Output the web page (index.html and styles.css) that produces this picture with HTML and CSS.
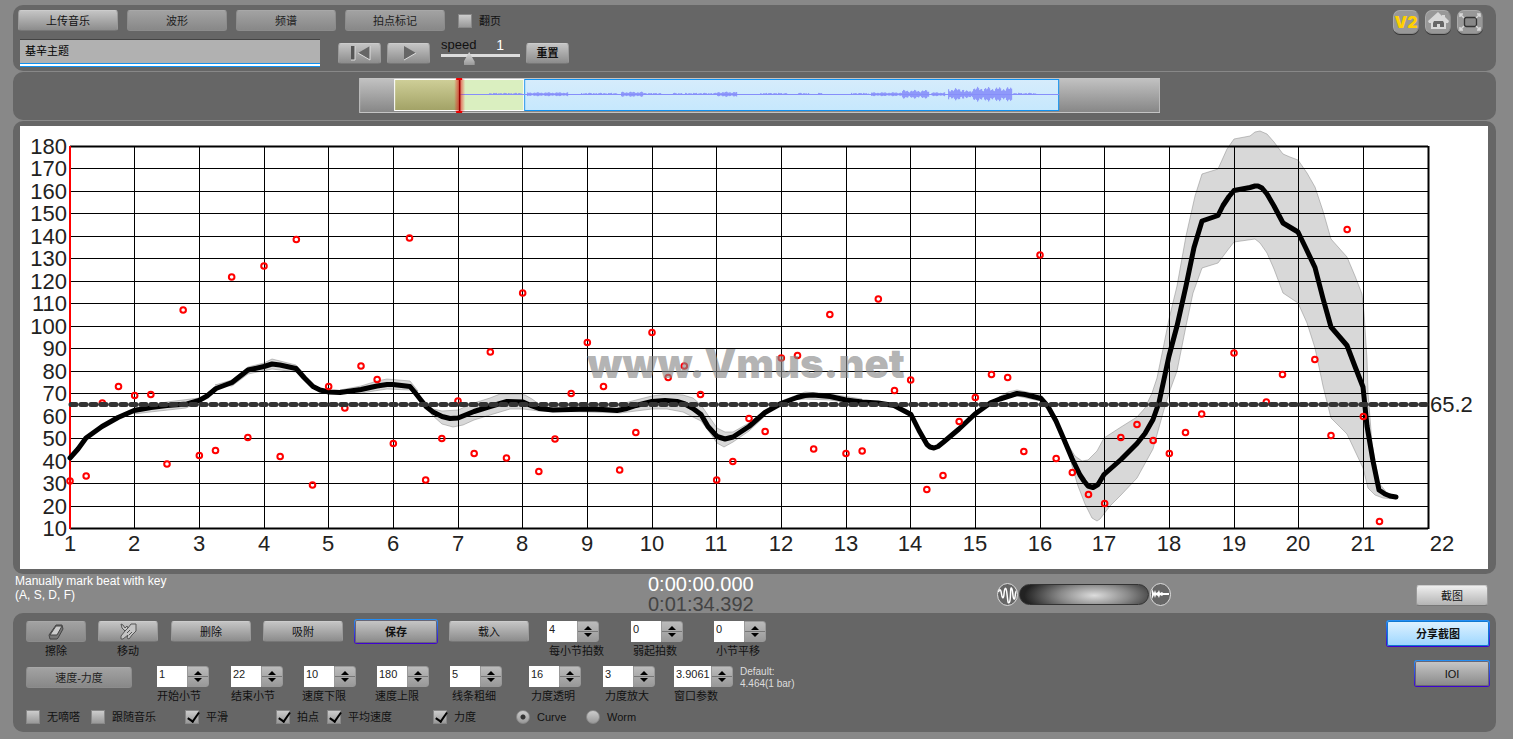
FILE: index.html
```
<!DOCTYPE html>
<html lang="zh-CN">
<head>
  <meta charset="UTF-8">
  <title>Vmus.net</title>
  <link rel="stylesheet" href="styles.css">
</head>
<body>
  <header class="panel top-panel">
    <div class="top-main">
      <div class="tab-row">
        <button class="btn tab">上传音乐</button>
        <button class="btn tab dim">波形</button>
        <button class="btn tab dim">频谱</button>
        <button class="btn tab dim">拍点标记</button>
        <label class="check"><input type="checkbox"><span>翻页</span></label>
      </div>
      <div class="play-row">
        <input class="title-input" type="text" value="基辛主题" aria-label="标题">
        <div class="play-buttons">
          <button class="btn play" aria-label="回到开头">
            <svg width="22" height="16" viewBox="0 0 22 16"><path d="M2 1v14h4V1z" fill="#555"/><path d="M21 1v14L9 8z" fill="#666"/><path d="M9 8l12 7V1M6 1v14H2" fill="none" stroke="#ddd"/></svg>
          </button>
          <button class="btn play" aria-label="播放">
            <svg width="16" height="16" viewBox="0 0 16 16"><path d="M3 1v14l12-7z" fill="#666"/><path d="M3 15l12-7" stroke="#ddd"/></svg>
          </button>
        </div>
        <div class="speed">
          <label for="speed">speed</label>
          <output for="speed">1</output>
          <input id="speed" type="range" min="0" max="3" step="0.1" value="1">
        </div>
        <button class="btn reset">重置</button>
      </div>
    </div>
    <nav class="corner">
      <button class="corner-btn v2">V2</button>
      <button class="corner-btn" aria-label="主页">
        <svg width="24" height="22" viewBox="0 0 24 22"><path d="M12 1L2 10l1 2h2v6h15v-6h2l1-2-4-4V4h-3v1z" fill="#d8d8d8"/><path d="M7 16v-4l1-2h9l1 2v4h-4v-3h-3v3z" fill="#666"/></svg>
      </button>
      <button class="corner-btn" aria-label="全屏">
        <svg width="24" height="22" viewBox="0 0 24 22"><rect x="6.500" y="6.500" width="12" height="9" rx="2" fill="#888" stroke="#333" stroke-width="1.300"/><path d="M2 6V3h3M2 3l4 4M22 6V3h-3M22 3l-4 4M2 16v3h3M2 19l4-4M22 16v3h-3M22 19l-4-4" fill="none" stroke="#d8d8d8" stroke-width="1.500"/></svg>
      </button>
    </nav>
  </header>

  <section class="panel overview-panel">
    <svg class="overview" viewBox="0 0 801 35">
      <defs>
        <linearGradient id="gBox" x2="0" y2="1"><stop offset="0" stop-color="#c2c2c2"/><stop offset="1" stop-color="#868686"/></linearGradient>
        <linearGradient id="gBlue" x2="0" y2="1"><stop offset="0" stop-color="#d6ecfc"/><stop offset="1" stop-color="#c6e8fd"/></linearGradient>
        <linearGradient id="gOlive" x2="0" y2="1"><stop offset="0" stop-color="#cfcf98"/><stop offset="1" stop-color="#a2a266"/></linearGradient>
        <linearGradient id="gGlow"><stop offset="0" stop-color="#f00" stop-opacity="0"/><stop offset=".5" stop-color="#d22" stop-opacity=".7"/><stop offset="1" stop-color="#f00" stop-opacity="0"/></linearGradient>
      </defs>
      <rect x=".5" y=".5" width="800" height="34" fill="url(#gBox)" stroke="#c4c4c4"/>
      <rect x="165.500" y="1.500" width="534" height="31" fill="url(#gBlue)" stroke="#1191f0"/>
      <rect x="35.500" y="1.500" width="129" height="31" fill="#daefc0"/>
      <rect x="35.500" y="1.500" width="65" height="31" fill="url(#gOlive)"/>
      <rect x="35.500" y="1.500" width="129" height="31" fill="none" stroke="#fff"/>
      <path id="wave" stroke="#868efa" fill="none"/>
      <rect x="95" y="1" width="11" height="33" fill="url(#gGlow)"/>
      <path d="M100.500 1v33" stroke="#900" stroke-width="1.500"/>
      <path d="M97 0h6v2h-6zM97 33h6v2h-6z" fill="#e00"/>
    </svg>
  </section>

  <main class="panel chart-panel">
    <svg class="chart" viewBox="0 0 1468 443">
      <g fill="#888" fill-opacity=".33" stroke="#888" stroke-opacity=".5">
        <polygon points="1047,317 1055,330 1062,335 1068,334 1077,325 1084,312 1101,301 1117,291 1125,282 1132,267 1137,252 1143,223 1149,193 1157,160 1166,110 1175,70 1182,48 1198,43 1207,23 1214,13 1230,10 1235,6 1240,5 1247,8 1254,16 1263,28 1270,31 1278,34 1287,47 1295,61 1303,85 1311,113 1327,131 1335,150 1342,168 1344,187 1347,233 1348,267 1352,317 1359,357 1367,367 1376,370 1376,373 1363,372 1355,369 1348,362 1343,342 1327,308 1311,292 1303,260 1295,222 1287,197 1278,177 1263,167 1254,143 1247,127 1240,117 1235,113 1214,116 1207,125 1198,137 1182,142 1173,167 1166,200 1157,245 1149,267 1143,287 1133,323 1117,352 1101,369 1090,380 1080,393 1077,395 1072,392 1065,378 1058,360 1052,340"/>
        <polygon points="402,273 413,283 422,285 438,284 454,277 470,272 480,268 500,268 505,269 512,273 519,278 567,280 590,281 616,274 632,270 647,268 663,269 673,272 681,279 697,302 705,306 713,306 729,297 745,284 745,290 729,305 713,316 704,321 697,317 690,307 681,295 663,286 647,283 632,283 600,287 567,286 519,285 503,283 490,283 470,289 454,294 443,299 433,301 422,298 412,289"/>
        <polygon points="195,259 212,254 228,241 244,237 252,233 260,235 276,239 286,250 276,246 252,243 228,248 212,260"/>
        <polygon points="320,264 341,260 357,255 367,253 390,255 398,265 390,264 367,263 341,267"/>
        <polygon points="114,282 147,276 179,272 186,272 166,282 130,286 114,288"/>
        <polygon points="761,275 785,266 810,268 842,273 842,279 810,274 785,273"/>
        <polygon points="975,273 988,266 997,264 1021,269 1025,276 997,270"/>
      </g>
      <g id="grid"></g>
      <polyline class="curve" points="50,332 58,323 66,312 82,300.500 98,291.500 114,284.500 131,281.500 147,279.500 167,278 179,274.500 187,270 196,262.500 212,256.500 228,244 244,240.500 252,238 260,239 276,242.500 284,251.500 293,260.500 300,264 309,266 320,266.500 341,263.500 357,260 367,258.500 373,258.500 390,260.500 395,266.500 406,280.500 413,286 422,290.500 430,292.500 438,292 454,285.500 470,280.500 487,275.500 503,276 512,280 519,282.500 533,284 551,283.500 567,283 583,283.500 597,284.500 607,282.500 616,279.500 632,275.500 645,274.500 657,275.500 665,278 673,282.500 681,288.500 688,300.500 697,310.500 705,313 713,311 729,300.500 745,286.500 761,277.500 777,271.500 785,269.500 793,269 810,270.500 826,274 842,276 858,277 874,279.500 891,288.500 899,304.500 907,318.500 910,321 914,322 918,320.500 923,316.500 939,303 955,288 971,276.500 980,273 997,267.500 1005,268.500 1021,272.500 1028,280.500 1036,295 1044,313.500 1052,332.500 1060,349 1064,355 1068,360 1073,361.500 1078,358.500 1084,348.500 1101,333.500 1117,317.500 1125,307.500 1133,293.500 1139,276.500 1149,230 1157,200 1166,160 1174,121.500 1182,95 1198,89.500 1203,79.500 1209,70.500 1214,64.500 1230,61.500 1235,60 1238,60 1242,62 1247,68 1254,80 1263,97 1278,106 1286,122.500 1295,141.500 1303,172.500 1311,201 1327,219.500 1335,240.500 1343,261 1347,300 1353,335 1359,364 1365,368 1370,370 1376,371"/>
      <g id="dots"></g>
      <path class="average" d="M51 278.500H1407"/>
      <text class="axis" x="1410" y="286">65.2</text>
      <text class="watermark" x="726" y="252">www.Vmus.net</text>
    </svg>
  </main>

  <section class="status">
    <p class="hint">Manually mark beat with key<br>(A, S, D, F)</p>
    <div class="time"><div>0:00:00.000</div><div class="total">0:01:34.392</div></div>
    <div class="volume">
      <svg width="21" height="23" viewBox="0 0 21 23"><ellipse cx="10.500" cy="11.500" rx="10" ry="11" fill="#666" stroke="#ddd"/><path d="M1.500 9C3 5 4 7 4.500 11s2 6 2.500 0 2-9 3 0 1 10 2.500 8S13 4 14.500 5s1 10 2.500 11 1-8 2.500-8" fill="none" stroke="#fff" stroke-width="1.500"/></svg>
      <input type="range" value="60" aria-label="音量">
      <svg width="21" height="23" viewBox="0 0 21 23"><ellipse cx="10.500" cy="11.500" rx="10" ry="11" fill="#666" stroke="#ddd"/><path d="M2 6l2 4 1-3 1 3 2-1 1-2 1 3 2-1 1 1h6v2h-6l-1 1-2-1-1 3-1-2-2-1-1 3-1-3-2 4z" fill="#fff"/></svg>
    </div>
    <button class="btn shot">截图</button>
  </section>

  <section class="panel control-panel">
    <div class="controls">
      <div class="row row-edit">
        <div class="tool">
          <button class="btn dim" id="erase"><svg width="18" height="16" viewBox="0 0 18 16"><path d="M9 1h6l1 4-5 9-1 1H3l-1-4z" fill="#777" stroke="#444"/><path d="M9 2h6l-5 9H3z" fill="#ccc" stroke="#444"/></svg></button>
          <label for="erase">擦除</label>
        </div>
        <div class="tool">
          <button class="btn" id="move"><svg width="18" height="17" viewBox="0 0 18 17"><path d="M2 1l1 4 3 3-4 5v3h2l5-4-1 3 2 1 3-4 4-4V1h-5L9 5 8 3 6 5 4 2z" fill="#c4c4c4" stroke="#555"/><path d="M6 8l3-3M8 10l3-3M10 12l3-3" stroke="#555"/></svg></button>
          <label for="move">移动</label>
        </div>
        <button class="btn wide">删除</button>
        <button class="btn wide">吸附</button>
        <button class="btn wide outlined save">保存</button>
        <button class="btn wide">载入</button>
        <div class="field indent"><div class="spinner"><input id="f1" type="number" value="4"><button aria-label="调整"></button></div><label for="f1">每小节拍数</label></div>
        <div class="field indent"><div class="spinner"><input id="f2" type="number" value="0"><button aria-label="调整"></button></div><label for="f2">弱起拍数</label></div>
        <div class="field indent"><div class="spinner"><input id="f3" type="number" value="0"><button aria-label="调整"></button></div><label for="f3">小节平移</label></div>
      </div>
      <div class="row row-range">
        <button class="btn dim mode">速度-力度</button>
        <div class="field"><div class="spinner"><input id="f4" type="number" value="1"><button aria-label="调整"></button></div><label for="f4">开始小节</label></div>
        <div class="field"><div class="spinner"><input id="f5" type="number" value="22"><button aria-label="调整"></button></div><label for="f5">结束小节</label></div>
        <div class="field outdent"><div class="spinner"><input id="f6" type="number" value="10"><button aria-label="调整"></button></div><label for="f6">速度下限</label></div>
        <div class="field outdent"><div class="spinner"><input id="f7" type="number" value="180"><button aria-label="调整"></button></div><label for="f7">速度上限</label></div>
        <div class="field indent"><div class="spinner"><input id="f8" type="number" value="5"><button aria-label="调整"></button></div><label for="f8">线条粗细</label></div>
        <div class="field indent"><div class="spinner"><input id="f9" type="number" value="16"><button aria-label="调整"></button></div><label for="f9">力度透明</label></div>
        <div class="field indent"><div class="spinner"><input id="f10" type="number" value="3"><button aria-label="调整"></button></div><label for="f10">力度放大</label></div>
        <div class="field"><div class="spinner long"><input id="f11" type="number" step="any" value="3.9061"><button aria-label="调整"></button></div><label for="f11">窗口参数</label></div>
        <p class="default">Default:<br>4.464(1 bar)</p>
      </div>
      <div class="row row-options">
        <label class="check"><input type="checkbox"><span>无嘀嗒</span></label>
        <label class="check"><input type="checkbox"><span>跟随音乐</span></label>
        <label class="check"><input type="checkbox" checked><span>平滑</span></label>
        <label class="check"><input type="checkbox" checked><span>拍点</span></label>
        <label class="check"><input type="checkbox" checked><span>平均速度</span></label>
        <label class="check"><input type="checkbox" checked><span>力度</span></label>
        <label class="check"><input type="radio" name="style" checked><span>Curve</span></label>
        <label class="check"><input type="radio" name="style"><span>Worm</span></label>
      </div>
    </div>
    <div class="side">
      <button class="btn outlined share">分享截图</button>
      <button class="btn outlined ioi">IOI</button>
    </div>
  </section>

  <script>
    const left = 50, right = 1408, top_ = 20, bottom = 402.5;
    const barX = bar => left + (bar - 1) * (right - left) / 21;
    const tempoY = t => bottom - (t - 10) * (bottom - top_) / 170;

    // grid and axis numbers
    let grid = '';
    for (let t = 10; t <= 180; t += 10) {
      const y = Math.floor(tempoY(t)) + 0.5;
      grid += `<path d="M${left} ${y}H${right}" stroke="#000" stroke-width="${t == 10 || t == 180 ? 2 : 1}"/>`;
      grid += `<text class="axis" x="47" y="${Math.round(y + 7)}" text-anchor="end">${t}</text>`;
    }
    for (let bar = 1; bar <= 22; bar++) {
      const x = Math.floor(barX(bar));
      const color = bar == 1 ? '#f00' : '#000';
      grid += `<path d="M${bar == 1 ? x : x + 0.5} ${top_}V403" stroke="${color}" stroke-width="${bar == 1 || bar == 22 ? 2 : 1}"/>`;
      grid += `<text class="axis" x="${bar == 22 ? x + 14 : x}" y="425" text-anchor="middle">${bar}</text>`;
    }
    document.getElementById('grid').innerHTML = grid;

    // one entry per beat, four beats in a bar, 0 = outside the chart
    const beats = [
      355, 350, 277, 260.5, 269.5, 268.5, 338, 184, 329.5, 324.5, 151, 311.5, 140, 330.5, 113.5, 359,
      260.5, 282, 240, 253.5, 317.5, 112, 354, 312.5, 275, 327.5, 226, 332, 167, 345.5, 313, 267.5,
      216.5, 260.5, 344, 306.5, 206.5, 251.5, 240, 268.5, 354, 335.5, 292.5, 305.5, 232, 229.5, 323, 188.5,
      327.5, 325, 173, 264.5, 254, 363.5, 349.5, 295.5, 271.5, 248.5, 251.5, 325.5, 129, 332.5, 346.5, 368.5,
      377.5, 311.5, 298.5, 314.5, 327.5, 306.5, 288, 0, 227, 0, 276, 248.5, 0, 233.5, 309.5, 103.5, 290.5, 395.5
    ];
    document.getElementById('dots').innerHTML = beats.map((y, i) =>
      y ? `<circle cx="${barX(1 + i / 4)}" cy="${y}" r="2.8"/>` : '').join('');

    // [from, to, loudness] parts of the recording
    const parts = [[130, 164, 1], [168, 209, 1.5], [222, 259, 1], [262, 284, 2], [284, 302, 1],
      [313, 324, 1], [326, 358, 1], [358, 378, 2], [401, 428, 1], [438, 450, 1], [458, 464, 1],
      [492, 510, 1], [512, 543, 1.5], [543, 570, 3.5], [572, 586, 1.5], [589, 605, 5],
      [605, 613, 3], [613, 653, 6], [653, 677, 1]];
    let wave = 'M101 16.500H700';
    parts.forEach(([from, to, loud]) => {
      for (let x = from; x < to; x++) {
        const h = loud * (0.8 + 0.2 * Math.sin(x * 1.7) + 0.2 * Math.cos(x * 0.6)) - 0.5;
        if (loud == 1 && x % 5 == 3) continue;
        wave += `M${x + 0.5} ${15.5 - h}V${17 + (loud > 1 ? h : 0)}`;
      }
    });
    document.getElementById('wave').setAttribute('d', wave);
  </script>
</body>
</html>
```
FILE: styles.css
```
* {
  box-sizing: border-box;
}

body {
  margin: 0;
  padding: 5px 17px 7px 13px;
  background: #888;
  font-family: "Liberation Sans", "Noto Sans CJK SC", sans-serif;
  font-size: 11px;
  line-height: 14px;
  color: #111;
}

p {
  margin: 0;
}

svg {
  display: block;
}

.panel {
  background: #666;
  border-radius: 10px;
}

/* buttons */
.btn {
  display: inline-flex;
  align-items: center;
  justify-content: center;
  height: 21px;
  padding: 0;
  border: 1px solid #999;
  border-top-color: #ccc;
  border-bottom-color: #777;
  border-radius: 3px;
  background: linear-gradient(#c4c4c4, #8c8c8c);
  color: #111;
  font-family: inherit;
  font-size: 11px;
  line-height: 14px;
  cursor: pointer;
}

.btn.dim {
  background: linear-gradient(#a2a2a2, #888);
  border-color: #8c8c8c;
  border-top-color: #a8a8a8;
  color: #222;
}

.btn.outlined {
  height: 27px;
  border: 1px solid transparent;
  background: linear-gradient(#c8c8c8, #888) padding-box, linear-gradient(#2490f4, #4000d0) border-box;
  box-shadow: inset 0 0 0 1px #667;
}

/* checkboxes and radios */
.check {
  display: flex;
  align-items: center;
  gap: 7px;
  height: 14px;
  white-space: nowrap;
}

.check input {
  appearance: none;
  flex: none;
  width: 14px;
  height: 14px;
  margin: 0;
  border: 1px solid #888;
  background: linear-gradient(#ccc, #999);
}

.check input[type=checkbox]:checked::after {
  content: "";
  display: block;
  width: 5px;
  height: 10px;
  margin: -1px 0 0 4px;
  border: solid #000;
  border-width: 0 2px 2px 0;
  transform: rotate(35deg);
}

.check input[type=radio] {
  border-radius: 50%;
}

.check input[type=radio]:checked {
  background: radial-gradient(circle, #333 2px, transparent 3px), linear-gradient(#ccc, #999);
}

/* top bar */
.top-panel {
  display: flex;
  justify-content: space-between;
  padding: 5px 13px 4px 5px;
  margin-bottom: 1px;
}

.tab-row {
  display: flex;
  align-items: center;
  gap: 9px;
  margin-bottom: 8px;
}

.tab {
  width: 100px;
}

.tab-row .check {
  margin-left: 4px;
}

.play-row {
  display: flex;
  align-items: center;
  padding-left: 2px;
}

.title-input {
  width: 300px;
  height: 28px;
  margin-right: 18px;
  padding: 0 5px 6px;
  border: 0;
  border-top: 1px solid #444;
  border-bottom: 1px solid #1191f0;
  background: #b1b1b1;
  box-shadow: inset 0 -2px #fff, inset 0 -3px #1191f0;
  font: inherit;
  color: #000;
}

.play-buttons {
  display: flex;
  gap: 6px;
}

.play,
.reset {
  width: 43px;
}

.reset {
  font-weight: bold;
}

.speed {
  display: grid;
  grid-template-columns: 1fr auto;
  align-self: flex-start;
  width: 79px;
  margin: -1px 6px 0 11px;
  font-size: 13px;
}

.speed output {
  padding-right: 16px;
  color: #fff;
  font-size: 14px;
}

.speed input {
  appearance: none;
  grid-column: 1 / 3;
  width: 100%;
  height: 13px;
  margin: 0;
  background: linear-gradient(#ddd, #ddd) 0 2px / 100% 3px no-repeat;
}

.speed input::-webkit-slider-thumb {
  appearance: none;
  width: 11px;
  height: 13px;
  background: linear-gradient(#ddd, #999);
  clip-path: polygon(50% 0, 100% 75%, 100% 100%, 0 100%, 0 75%);
}

.corner {
  display: flex;
  gap: 6px;
}

.corner-btn {
  display: flex;
  align-items: center;
  justify-content: center;
  width: 26px;
  height: 24px;
  padding: 0;
  border: 1px solid #888;
  border-top-color: #aaa;
  border-left-color: #aaa;
  border-radius: 7px;
  background: #989898;
  box-shadow: 0 1px #333;
}

.v2 {
  color: #ffd000;
  font-family: Inter, sans-serif;
  font-size: 16px;
  font-weight: 900;
}

/* recording overview */
.overview-panel {
  padding: 6px 0 7px 10px;
  margin-bottom: 1px;
}

.overview {
  width: 54.4%;
  margin: 0 auto;
}

/* tempo chart */
.chart-panel {
  padding: 5px 8px 5px 7px;
}

.chart {
  width: 100%;
  background: #fff;
}

.axis {
  font-size: 22px;
  fill: #222;
}

.curve {
  fill: none;
  stroke: #000;
  stroke-width: 5;
  stroke-linecap: round;
  stroke-linejoin: round;
}

#dots circle {
  fill: none;
  stroke: #f00;
  stroke-width: 2;
}

.average {
  stroke: #333;
  stroke-width: 5;
  stroke-linecap: round;
  stroke-dasharray: 5 5;
}

.watermark {
  fill: #888;
  fill-opacity: 0.65;
  font-family: Inter, sans-serif;
  font-size: 40px;
  font-weight: 900;
  text-anchor: middle;
}

/* status line */
.status {
  display: grid;
  grid-template-columns: 635px 349px 1fr auto;
  height: 39px;
  padding: 0 8px 0 0;
}

.hint {
  padding-left: 2px;
  color: #fff;
  font-size: 12px;
}

.time {
  color: #fff;
  font-size: 20px;
  line-height: 20px;
}

.total {
  color: #444;
}

.volume {
  display: flex;
  align-items: center;
  gap: 1px;
}

.volume input {
  appearance: none;
  width: 130px;
  height: 21px;
  margin: 0;
  border: 1px solid #333;
  border-radius: 11px;
  background: radial-gradient(ellipse 70px 22px at 58% 55%, #ddd, #888 50%, #222);
}

.volume input::-webkit-slider-thumb {
  appearance: none;
  width: 0;
}

.shot {
  width: 72px;
  margin-top: 11px;
  background: linear-gradient(#eee, #b4b4b4);
}

/* bottom controls */
.control-panel {
  display: flex;
  justify-content: space-between;
  padding: 8px 6px 8px 13px;
}

.row {
  display: grid;
  align-items: start;
}

.row-edit {
  grid-template-columns: 72px 73px 92px 92px 94px 98px 84px 83px 66px;
  margin-bottom: 8px;
}

.row-range {
  grid-template-columns: 131px 74px 73px 73px 73px 79px 74px 71px 66px auto;
  margin-bottom: 7px;
}

.row-options {
  grid-template-columns: 65px 94px 91px 51px 106px 83px 70px auto;
}

.tool {
  display: flex;
  flex-direction: column;
  width: 60px;
  gap: 2px;
  text-align: center;
}

.wide {
  width: 80px;
}

.btn.save {
  width: 84px;
  height: 25px;
  margin: -2px -1px;
  font-weight: bold;
}

.btn.mode {
  width: 106px;
  margin-top: 1px;
}

.field label {
  display: block;
  margin-top: 2px;
  white-space: nowrap;
}

.indent label {
  padding-left: 2px;
}

.outdent label {
  margin-left: -2px;
}

.spinner {
  display: flex;
  width: 52px;
  height: 21px;
}

.spinner.long {
  width: 59px;
}

.spinner input {
  appearance: textfield;
  flex: 1;
  min-width: 0;
  height: 21px;
  padding: 0 0 5px 2px;
  border: 0;
  background: #fff;
  font: inherit;
  color: #222;
}

.spinner input::-webkit-inner-spin-button {
  display: none;
}

.spinner button {
  display: flex;
  flex-direction: column;
  align-items: center;
  justify-content: space-around;
  width: 22px;
  height: 21px;
  padding: 2px 0;
  border: 1px solid #999;
  border-radius: 0 3px 3px 0;
  background: linear-gradient(transparent 9px, #777 9px, #777 10px, transparent 10px), linear-gradient(#bbb, #999);
}

.spinner button::before,
.spinner button::after {
  content: "";
  border: 4px solid transparent;
}

.spinner button::before {
  border-top: 0;
  border-bottom-color: #000;
}

.spinner button::after {
  border-bottom: 0;
  border-top-color: #000;
}

.default {
  color: #ddd;
  font-size: 10px;
  line-height: 12px;
}

.side {
  display: flex;
  flex-direction: column;
  align-items: flex-end;
  gap: 13px;
  margin-top: -1px;
}

.share {
  width: 104px;
  font-weight: bold;
}

.btn.share {
  background: linear-gradient(#e0f2ff, #9cd6fe) padding-box, linear-gradient(#2490f4, #4000d0) border-box;
  box-shadow: inset 0 0 0 1px #1178d0;
}

.ioi {
  width: 76px;
}
```
